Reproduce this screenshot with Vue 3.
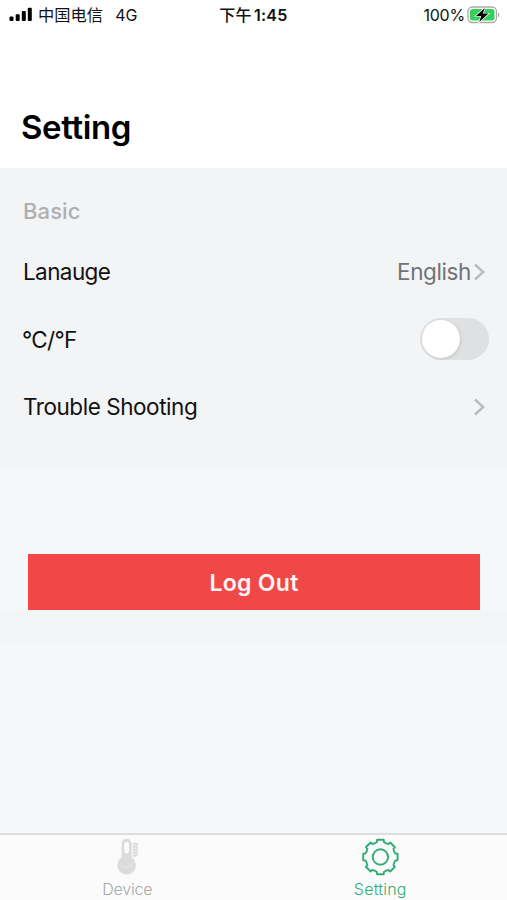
<template>
  <div class="screen">
    <div class="status-bar">
      <div class="carrier">
        <svg class="signal" width="24" height="16" viewBox="0 0 24 16">
          <rect x="0.5" y="10.5" width="4" height="4.5" rx="1" />
          <rect x="6.7" y="8.3" width="4" height="6.7" rx="1" />
          <rect x="12.8" y="5" width="4" height="10" rx="1" />
          <rect x="18.8" y="1.8" width="4" height="13.2" rx="1" />
        </svg>
        <span class="operator">中国电信</span>
        <span class="network">4G</span>
      </div>
      <div class="time"><span>下午</span>1:45</div>
      <div class="power">
        <span>100%</span>
        <svg width="34" height="20" viewBox="0 0 34 20">
          <rect x="1" y="2" width="28.5" height="15.5" rx="4.5" fill="#fff" stroke="#a9aba9" stroke-width="1.3" />
          <rect x="3" y="4" width="24.5" height="11.5" rx="2.5" fill="#34cf5c" />
          <path d="M31 7.5c1.8.6 1.8 4 0 4.6z" fill="#a9aba9" />
          <path d="M17.8 3L8.9 10.9h5.3l-1.9 6.2 9.2-8.5h-5.7z" fill="#000" stroke="#fff" stroke-width="1.4" paint-order="stroke" />
        </svg>
      </div>
    </div>

    <header class="header">
      <h1>Setting</h1>
    </header>

    <main class="content">
      <section class="group">
        <h2>Basic</h2>
        <div class="row">
          <span class="label language">Lanauge</span>
          <span class="value">{{ language }}</span>
          <svg class="chevron" width="12" height="18" viewBox="0 0 12 18"><path d="M2 1.5L10.2 9 2 16.5" /></svg>
        </div>
        <div class="row">
          <span class="label unit">°C/°F</span>
          <button class="switch" :class="{ on: fahrenheit }" aria-label="°C/°F" @click="fahrenheit = !fahrenheit">
            <span class="knob"></span>
          </button>
        </div>
        <div class="row">
          <span class="label trouble">Trouble Shooting</span>
          <svg class="chevron" width="12" height="18" viewBox="0 0 12 18"><path d="M2 1.5L10.2 9 2 16.5" /></svg>
        </div>
      </section>

      <section class="actions">
        <button class="logout"><span>Log Out</span></button>
      </section>
    </main>

    <nav class="tab-bar">
      <button class="tab" :class="{ active: tab === 'device' }" @click="tab = 'device'">
        <svg width="40" height="40" viewBox="-0.6 0.2 40 40">
          <path
            fill="currentColor"
            fill-rule="evenodd"
            d="M14 7a5 5 0 0 1 10 0v13.8a9.2 9.2 0 1 1-10 0zM16.6 7.5v6.8a2.4 2.4 0 0 0 4.8 0V7.5a2.4 2.4 0 0 0-4.8 0z"
          />
          <path d="M25.2 6.5h5.3v12l-5.3 2.5z" fill="currentColor" opacity="0.55" />
          <path d="M25.2 7h5M25.2 10h5M25.2 13h5M25.2 16h5M25.2 19h4" stroke="currentColor" stroke-width="1.5" />
          <path d="M13 26.5a6.3 6.3 0 0 0 12 0" fill="none" stroke="#e8e8e8" />
        </svg>
        <span class="device-label">Device</span>
      </button>
      <button class="tab" :class="{ active: tab === 'setting' }" @click="tab = 'setting'">
        <svg class="gear" width="40" height="40" viewBox="-20.4 -20 40 40">
          <path :d="gearPath" />
          <circle r="7.7" />
        </svg>
        <span class="setting-label">Setting</span>
      </button>
    </nav>
  </div>
</template>

<script setup>
import { ref } from 'vue';

const language = ref('English');
const fahrenheit = ref(false);
const tab = ref('setting');

const polar = (radius, degrees) => {
  const angle = (degrees * Math.PI) / 180;
  return `${(radius * Math.cos(angle)).toFixed(2)} ${(radius * Math.sin(angle)).toFixed(2)}`;
};

// Eight teeth joined by shallow concave arcs
const buildGear = () => {
  let d = '';
  for (let i = 0; i < 8; i++) {
    const a = i * 45 - 90;
    d += `${i ? 'L' : 'M'}${polar(15.4, a - 13)} L${polar(17.5, a - 11)} L${polar(17.5, a + 11)} L${polar(15.4, a + 13)}`;
    d += ` A10 10 0 0 0 ${polar(15.4, a + 32)} `;
  }
  return d + 'Z';
};

const gearPath = buildGear();
</script>

<style>
body {
  margin: 0;
  background: #f5f6f8;
}
</style>

<style scoped>
.screen {
  height: 900px;
  display: flex;
  flex-direction: column;
  overflow: hidden;
  background: #f5f7f9;
  color: #111;
  font-family: Inter, "Noto Sans CJK SC", sans-serif;
}

button {
  border: 0;
  padding: 0;
  font-family: inherit;
  cursor: pointer;
}

svg {
  display: block;
  flex: none;
}

.status-bar {
  height: 30px;
  flex: none;
  display: grid;
  grid-template-columns: 1fr 1fr 1fr;
  align-items: center;
  background: #fff;
  font-size: 16px;
  line-height: 30px;
}

.carrier {
  display: flex;
  align-items: center;
  padding-left: 9px;
}

.signal {
  margin-top: -3px;
}

.operator {
  margin-left: 5px;
  font-size: 16.3px;
}

.network {
  margin-left: 12px;
}

.time {
  text-align: center;
  font-weight: 600;
  letter-spacing: 0.3px;
}

.time span {
  font-weight: 500;
  margin-right: 2px;
}

.power {
  display: flex;
  align-items: center;
  justify-content: flex-end;
  gap: 2px;
  padding-right: 6px;
  letter-spacing: -0.2px;
}

.power svg {
  margin-top: -1px;
}

.header {
  height: 138px;
  flex: none;
  box-sizing: border-box;
  padding: 75px 0 0 21px;
  background: #fff;
}

h1 {
  margin: 0;
  font-size: 33px;
  line-height: 44px;
  font-weight: 600;
  letter-spacing: -0.4px;
  color: #000;
}

.content {
  flex: 1;
}

.group {
  height: 300px;
  box-sizing: border-box;
  padding: 25px 18px 0 23px;
  background: #f3f4f6;
}

h2 {
  margin: 0 0 9px;
  font-size: 22px;
  line-height: 36px;
  font-weight: 500;
  letter-spacing: 0.1px;
  color: #adafb0;
}

.row {
  height: 67.5px;
  display: flex;
  align-items: center;
}

.label {
  flex: 1;
  font-size: 22.5px;
}

.language {
  letter-spacing: -0.6px;
}

.unit {
  margin-left: -1px;
  letter-spacing: -0.7px;
}

.trouble {
  letter-spacing: -0.45px;
}

.value {
  font-size: 22.5px;
  letter-spacing: -0.4px;
  color: #717375;
  margin-right: 2px;
}

.chevron {
  margin-right: 4px;
  fill: none;
  stroke: #b9bbbd;
  stroke-width: 2.4;
}

.switch {
  width: 69px;
  height: 42px;
  padding: 2px;
  border-radius: 21px;
  background: #dfe0e1;
}

.switch.on {
  background: #34cf5c;
}

.knob {
  display: block;
  width: 38px;
  height: 38px;
  border-radius: 50%;
  background: #fff;
  box-shadow: 1px 1px 3px rgba(0, 0, 0, 0.12);
}

.switch.on .knob {
  margin-left: 27px;
}

.actions {
  height: 176px;
  box-sizing: border-box;
  padding: 86px 27px 0 28px;
  background: linear-gradient(#f5f7f9 142px, #f3f5f7 142px);
}

.logout {
  width: 100%;
  height: 56px;
  padding-top: 1px;
  background: #ef4846;
  color: #fff5f4;
  font-size: 23px;
  font-weight: 600;
  letter-spacing: 0.3px;
}

.tab-bar {
  height: 67px;
  flex: none;
  box-sizing: border-box;
  display: flex;
  border-top: 2px solid #dcdddf;
  background: #fbfbfb;
}

.tab {
  flex: 1;
  display: flex;
  flex-direction: column;
  align-items: center;
  padding-top: 2px;
  background: none;
  color: #dbdbdb;
  font-size: 16px;
  font-weight: 300;
  line-height: 24px;
}

.tab span {
  color: #a8a8a8;
}

.tab.active,
.tab.active span {
  color: #2fae73;
}

.device-label {
  margin-left: 1px;
  letter-spacing: -0.2px;
}

.setting-label {
  letter-spacing: 0.2px;
}

.gear {
  fill: none;
  stroke: currentColor;
  stroke-width: 1.9;
  stroke-linejoin: round;
}
</style>
